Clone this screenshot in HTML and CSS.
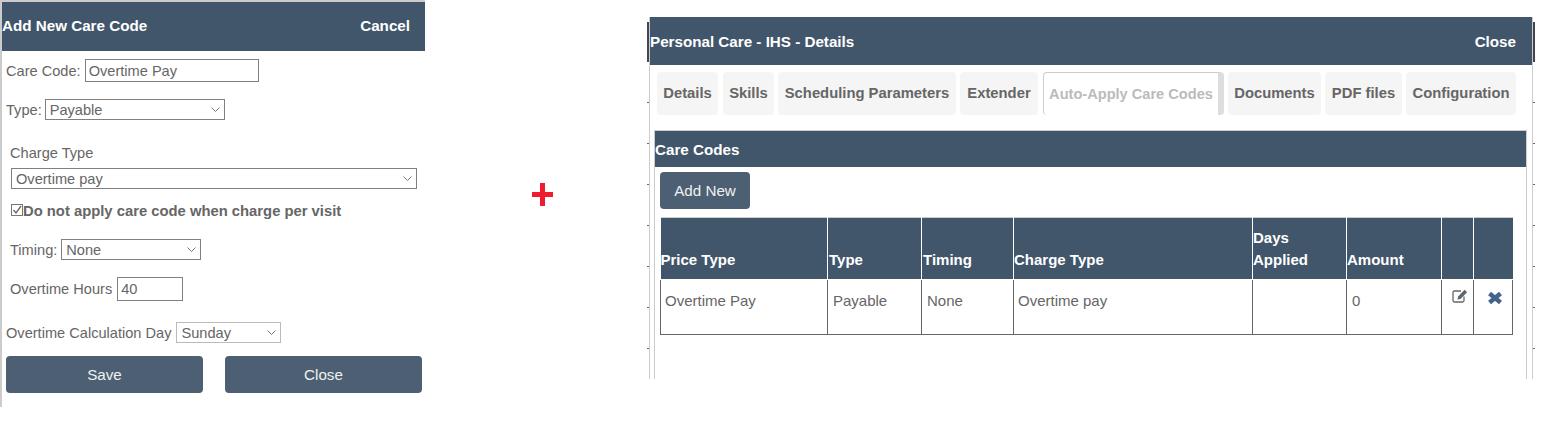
FILE: index.html
```html
<!DOCTYPE html>
<html lang="en">
<head>
    <meta charset="UTF-8">
    <title>Care Codes</title>
    <link rel="stylesheet" href="styles.css">
</head>
<body>
    <div class="add-panel">
        <div class="panel-head add-head">
            <span>Add New Care Code</span>
            <span class="head-link">Cancel</span>
        </div>
        <form class="add-form">
            <div class="row row-code">
                <label for="careCode">Care Code:</label>
                <input type="text" id="careCode" class="input-code" value="Overtime Pay">
            </div>
            <div class="row row-type">
                <label for="careType">Type:</label>
                <select id="careType" class="select-type"><option>Payable</option></select>
            </div>
            <div class="charge-block">
                <label for="chargeType">Charge Type</label>
                <select id="chargeType" class="select-charge"><option>Overtime pay</option></select>
            </div>
            <div class="row row-check">
                <input type="checkbox" id="noApply" checked>
                <label for="noApply">Do not apply care code when charge per visit</label>
            </div>
            <div class="row row-timing">
                <label for="timing">Timing:</label>
                <select id="timing" class="select-timing"><option>None</option></select>
            </div>
            <div class="row row-hours">
                <label for="hours">Overtime Hours</label>
                <input type="text" id="hours" class="input-hours" value="40">
            </div>
            <div class="row row-day">
                <label for="calcDay">Overtime Calculation Day</label>
                <select id="calcDay" class="select-day"><option>Sunday</option></select>
            </div>
            <div class="form-buttons">
                <button type="button" class="btn btn-wide">Save</button>
                <button type="button" class="btn btn-wide">Close</button>
            </div>
        </form>
    </div>

    <div class="plus-gap">
        <svg width="21" height="23" viewBox="0 0 21 23"><path d="M8 0h5v9h8v5h-8v9H8v-9H0V9h8z" fill="#ee1c2e"/></svg>
    </div>

    <div class="edge-ticks"></div>
    <div class="details-panel">
        <div class="panel-head details-head">
            <span>Personal Care - IHS - Details</span>
            <span class="head-link">Close</span>
        </div>
        <div class="tabs">
            <a class="tab tab-details">Details</a>
            <a class="tab tab-skills">Skills</a>
            <a class="tab tab-sched">Scheduling Parameters</a>
            <a class="tab tab-extender">Extender</a>
            <a class="tab tab-active">Auto-Apply Care Codes</a>
            <a class="tab tab-docs">Documents</a>
            <a class="tab tab-pdf">PDF files</a>
            <a class="tab tab-config">Configuration</a>
        </div>
        <div class="codes-section">
            <div class="codes-head">Care Codes</div>
            <button type="button" class="btn btn-add">Add New</button>
            <table class="codes-table">
                <colgroup>
                    <col class="col-price"><col class="col-type"><col class="col-timing"><col class="col-charge">
                    <col class="col-days"><col class="col-amount"><col class="col-edit"><col class="col-del">
                </colgroup>
                <thead>
                    <tr>
                        <th>Price Type</th>
                        <th>Type</th>
                        <th>Timing</th>
                        <th>Charge Type</th>
                        <th>Days Applied</th>
                        <th>Amount</th>
                        <th></th>
                        <th></th>
                    </tr>
                </thead>
                <tbody>
                    <tr>
                        <td>Overtime Pay</td>
                        <td>Payable</td>
                        <td>None</td>
                        <td>Overtime pay</td>
                        <td></td>
                        <td>0</td>
                        <td class="icon-cell">
                            <svg class="icon-edit" width="17" height="14" viewBox="0 0 17 14">
                                <path d="M12 7.500V11.500a1.500 1.500 0 0 1-1.500 1.500H2.500A1.500 1.500 0 0 1 1 11.500V3.500A1.500 1.500 0 0 1 2.500 2H9" fill="none" stroke="#666" stroke-width="1.300"/>
                                <path d="M5.500 10.500l.6-3L12.600.8l2.500 2.400-6.600 6.700z" fill="#5c6670"/>
                            </svg>
                        </td>
                        <td class="icon-cell">
                            <svg class="icon-del" width="16" height="14" viewBox="0 0 16 14">
                                <path d="M2.500 2.500l11 9M13.500 2.500l-11 9" fill="none" stroke="#43638c" stroke-width="4.500"/>
                            </svg>
                        </td>
                    </tr>
                </tbody>
            </table>
        </div>
    </div>
    <div class="edge-ticks edge-right"></div>
</body>
</html>
```

FILE: styles.css
```css
html, body {
    height: 100%;
}

body {
    margin: 0;
    display: flex;
    align-items: flex-start;
    overflow: hidden;
    background-color: #fff;
    font-family: "Liberation Sans", Arial, sans-serif;
    font-size: 14.6px;
    color: #666;
}

label {
    color: #666;
}

input, select {
    box-sizing: border-box;
    margin: 0;
    font-family: "Liberation Sans", Arial, sans-serif;
    font-size: 14.6px;
    color: #666;
    background-color: #fff;
    border: 1px solid #808080;
    border-radius: 0;
    outline: none;
}

input[type="text"] {
    padding: 0 3px;
}

select {
    appearance: none;
    padding: 0 4px;
    background-image: url("data:image/svg+xml,%3Csvg xmlns='http://www.w3.org/2000/svg' width='9' height='5'%3E%3Cpath d='M.5.5l4 4 4-4' fill='none' stroke='%23777'/%3E%3C/svg%3E");
    background-repeat: no-repeat;
    background-position: right 4px center;
}

.panel-head {
    display: flex;
    justify-content: space-between;
    align-items: center;
    box-sizing: border-box;
    background-color: #41566b;
    color: #fff;
    font-size: 15.2px;
    font-weight: bold;
}

.btn {
    box-sizing: border-box;
    border: none;
    border-radius: 4px;
    background-color: #4d6073;
    color: #f0f0f0;
    font-family: "Liberation Sans", Arial, sans-serif;
    font-size: 15.2px;
    cursor: pointer;
}

/* left dialog */
.add-panel {
    box-sizing: border-box;
    flex: none;
    width: 425px;
    height: 407px;
    border-top: 2px solid #ccc;
    border-left: 2px solid #ccc;
}

.add-head {
    height: 49px;
    padding: 0 15px 2px 0;
}

.add-form {
    padding-left: 4px;
}

.row {
    display: flex;
    align-items: center;
    gap: 4px;
}

.row-code {
    padding-top: 8px;
}

.input-code {
    width: 174px;
    height: 23px;
}

.row-type {
    padding-top: 17px;
    gap: 3px;
}

.select-type {
    width: 180px;
    height: 21px;
}

.charge-block {
    padding: 25px 0 0 4px;
}

.charge-block label {
    display: block;
    margin-bottom: 7px;
}

.select-charge {
    display: block;
    width: 406px;
    height: 21px;
    margin-left: 1px;
}

.row-check {
    padding: 14px 0 0 5px;
    gap: 0;
    font-size: 14.8px;
    font-weight: bold;
}

.row-check input {
    appearance: none;
    width: 12px;
    height: 12px;
    flex: none;
    margin-bottom: 3px;
    border: 1px solid #777;
    background-image: url("data:image/svg+xml,%3Csvg xmlns='http://www.w3.org/2000/svg' width='10' height='10'%3E%3Cpath d='M1.500 5l2.500 3 5-7' fill='none' stroke='%23666' stroke-width='1.300'/%3E%3C/svg%3E");
    background-position: center;
}

.row-timing {
    padding: 20px 0 0 4px;
}

.select-timing {
    width: 140px;
    height: 21px;
}

.row-hours {
    padding: 17px 0 0 4px;
    gap: 5px;
}

.input-hours {
    width: 66px;
    height: 24px;
}

.row-day {
    padding-top: 21px;
    gap: 5px;
}

.select-day {
    width: 105px;
    height: 21px;
    border: 1px solid #bbb;
}

.form-buttons {
    display: flex;
    gap: 22px;
    padding-top: 13px;
}

.btn-wide {
    width: 197px;
    height: 37px;
}

/* plus sign between the two screens */
.plus-gap {
    flex: none;
    width: 222px;
    height: 206px;
    display: flex;
    justify-content: center;
    align-items: flex-end;
    padding-left: 13px;
    box-sizing: border-box;
}

/* bits of the page behind the details dialog */
.edge-ticks {
    flex: none;
    width: 2px;
    height: 379px;
    background-image:
        linear-gradient(#445 0, #445 100%),
        repeating-linear-gradient(transparent 0, transparent 40px, #666 40px, #666 41px);
    background-size: 100% 40px, 100% 100%;
    background-position: 0 22px, 0 62px;
    background-repeat: no-repeat, no-repeat;
}

/* right dialog */
.details-panel {
    box-sizing: border-box;
    flex: none;
    width: 884px;
    height: 362px;
    margin-top: 17px;
    border-left: 1px solid #ccc;
    border-right: 1px solid #ccc;
}

.details-head {
    height: 48px;
    padding-right: 16px;
}

.tabs {
    display: flex;
    gap: 4px;
    padding: 7px 0 0 7px;
    font-size: 14.8px;
    font-weight: bold;
}

.tab {
    box-sizing: border-box;
    height: 43px;
    padding-bottom: 2px;
    display: flex;
    justify-content: center;
    align-items: center;
    background-color: #f5f5f5;
    border-radius: 4px;
    color: #666;
}

.tab-details { width: 61px; margin-right: 1px; }
.tab-skills { width: 51px; }
.tab-sched { width: 178px; }
.tab-extender { width: 78px; margin-right: 1px; }
.tab-docs { width: 93px; }
.tab-pdf { width: 77px; }
.tab-config { width: 110px; }

.tab-active {
    width: 181px;
    padding-bottom: 0;
    background-color: #fff;
    color: #bbb;
    font-size: 14.6px;
    border-top: 1px solid #ccc;
    border-left: 1px solid #ccc;
    border-right: 6px solid #ddd;
}

.codes-section {
    box-sizing: border-box;
    width: 873px;
    height: 249px;
    margin: 15px 0 0 4px;
    border-top: 1px solid #ccc;
    border-left: 1px solid #ccc;
    border-right: 1px solid #ccc;
}

.codes-head {
    height: 36px;
    padding-top: 1px;
    box-sizing: border-box;
    display: flex;
    align-items: center;
    background-color: #41566b;
    color: #fff;
    font-size: 15.2px;
    font-weight: bold;
}

.btn-add {
    display: block;
    width: 90px;
    height: 37px;
    margin: 5px 0 0 5px;
}

.codes-table {
    table-layout: fixed;
    border-collapse: collapse;
    width: 852px;
    margin: 8px 0 0 5px;
    border-top: 1px solid #ccc;
}

.col-price { width: 167px; }
.col-type { width: 94px; }
.col-timing { width: 92px; }
.col-charge { width: 239px; }
.col-days { width: 94px; }
.col-amount { width: 95px; }
.col-edit { width: 32px; }
.col-del { width: 39px; }

.codes-table th {
    height: 62px;
    padding: 0 6px 8px 0;
    box-sizing: border-box;
    vertical-align: bottom;
    text-align: left;
    font-size: 15px;
    line-height: 22px;
    background-color: #41566b;
    color: #fff;
    border-left: 1px solid #fff;
    border-right: 1px solid #fff;
    border-bottom: 1px solid #fff;
}

.codes-table th:first-child { border-left: none; }
.codes-table th:last-child { border-right: none; }
.codes-table th:nth-child(2), .codes-table th:nth-child(3) { padding-left: 1px; }

.codes-table td {
    height: 55px;
    box-sizing: border-box;
    padding: 0 0 14px 4px;
    font-size: 15px;
    border: 1px solid #666;
    border-top: none;
}

.codes-table td:nth-child(2), .codes-table td:nth-child(3), .codes-table td:nth-child(6) {
    padding-left: 5px;
}

.codes-table td.icon-cell {
    vertical-align: top;
    padding: 9px 0 0 10px;
}

.codes-table td.icon-cell + td.icon-cell {
    padding: 11px 0 0 13px;
}
```
